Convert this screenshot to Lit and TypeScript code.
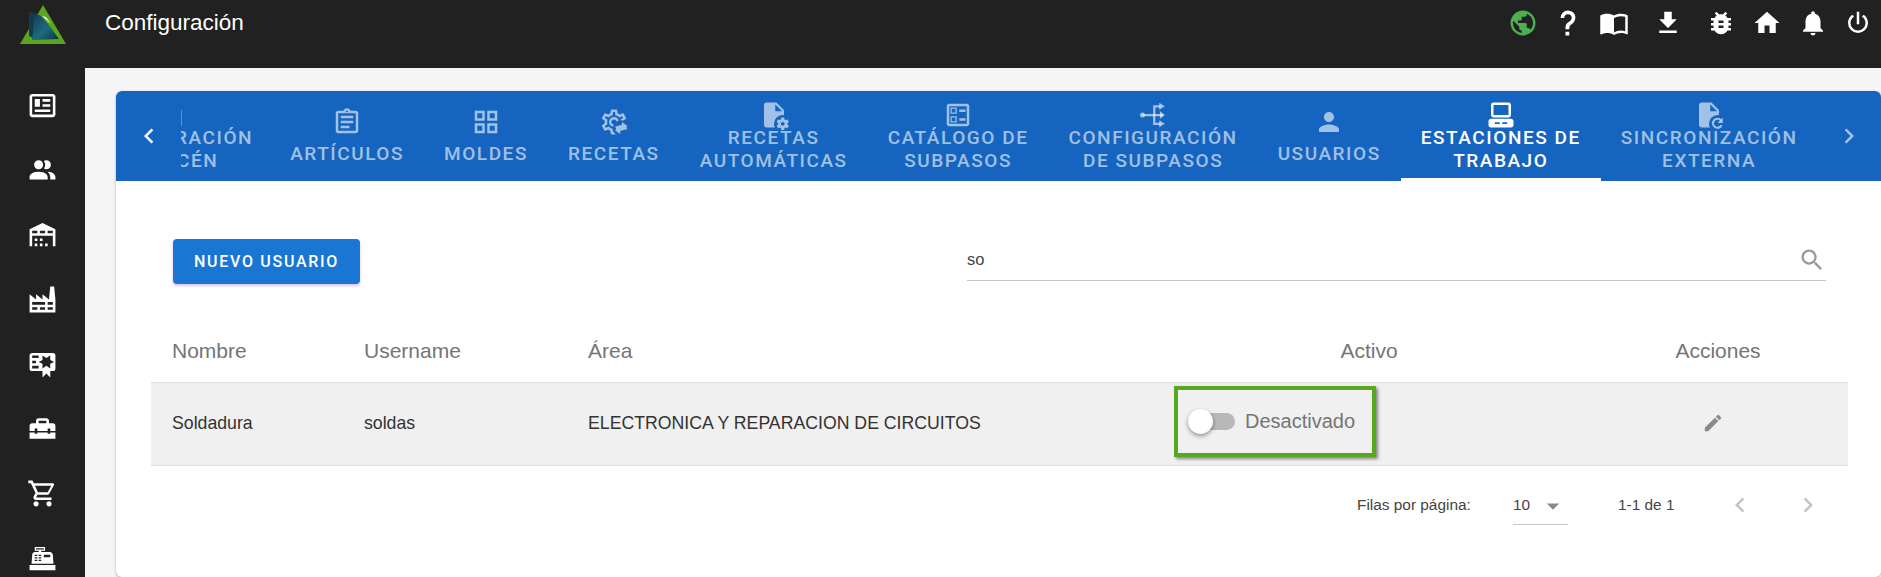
import { LitElement, html, css, svg } from "lit";
import { customElement } from "lit/decorators.js";

const P: Record<string, string> = {
  news: "M20 5L20 19L4 19L4 5H20M20 3H4C2.89 3 2 3.89 2 5V19C2 20.11 2.89 21 4 21H20C21.11 21 22 20.11 22 19V5C22 3.89 21.11 3 20 3M18 15H6V17H18V15M10 7H6V13H10V7M12 9H18V7H12V9M18 11H12V13H18V11Z",
  people: "M16 17V19H2V17S2 13 9 13 16 17 16 17M12.5 7.5A3.5 3.5 0 1 0 9 11A3.5 3.5 0 0 0 12.5 7.5M15.94 13A5.32 5.32 0 0 1 18 17V19H22V17S22 13.37 15.94 13M15 4A3.39 3.39 0 0 0 13.07 4.59A5 5 0 0 1 13.07 10.41A3.39 3.39 0 0 0 15 11A3.5 3.5 0 0 0 15 4Z",
  warehouse: "M6 19H8V21H6V19M12 3L2 8V21H4V13H20V21H22V8L12 3M8 11H4V9H8V11M14 11H10V9H14V11M20 11H16V9H20V11M6 15H8V17H6V15M10 15H12V17H10V15M10 19H12V21H10V19M14 19H16V21H14V19Z",
  factory: "M4,18V20H8V18H4M4,14V16H14V14H4M10,18V20H14V18H10M16,14V16H20V14H16M16,18V20H20V18H16M2,22V8L7,12V8L12,12V8L17,12L18,2H21L22,12V22H2Z",
  cert: "M4,3C2.89,3 2,3.89 2,5V15A2,2 0 0,0 4,17H12V22L15,19L18,22V17H20A2,2 0 0,0 22,15V8L22,6V5A2,2 0 0,0 20,3H16V3H4M12,5L15,7L18,5V8.5L21,10L18,11.5V15L15,13L12,15V11.5L9,10L12,8.5V5M4,5H9V7H4V5M4,9H7V11H4V9M4,13H9V15H4V13Z",
  toolbox: "M18 16H16V15H8V16H6V15H2V20H22V15H18V16M20 8H17V6C17 4.9 16.1 4 15 4H9C7.9 4 7 4.9 7 6V8H4C2.9 8 2 8.9 2 10V14H6V12H8V14H16V12H18V14H22V10C22 8.9 21.1 8 20 8M15 8H9V6H15V8Z",
  cart: "M17,18A2,2 0 0,1 19,20A2,2 0 0,1 17,22C15.89,22 15,21.1 15,20C15,18.89 15.89,18 17,18M1,2H4.27L5.21,4H20A1,1 0 0,1 21,5C21,5.17 20.95,5.34 20.88,5.5L17.3,11.97C16.96,12.58 16.3,13 15.55,13H8.1L7.2,14.63L7.17,14.75A0.25,0.25 0 0,0 7.42,15H19V17H7C5.89,17 5,16.1 5,15C5,14.65 5.09,14.32 5.24,14.04L6.6,11.59L3,4H1V2M7,18A2,2 0 0,1 9,20A2,2 0 0,1 7,22C5.89,22 5,21.1 5,20C5,18.89 5.89,18 7,18M16,11L18.78,6H6.14L8.5,11H16Z",
  register: "M2,17H22V21H2V17M6.25,7H9V6H6V3H14V6H11V7H17.8C18.8,7 19.8,8 20,9L20.5,16H3.5L4.05,9C4.05,8 5.05,7 6.25,7M13,9V11H18V9H13M6,9V10H8V9H6M9,9V10H11V9H9M6,11V12H8V11H6M9,11V12H11V11H9M6,13V14H8V13H6M9,13V14H11V13H9M7,4V5H13V4H7Z",
  earth: "M17.9,17.39C17.64,16.59 16.89,16 16,16H15V13A1,1 0 0,0 14,12H8V10H10A1,1 0 0,0 11,9V7H13A2,2 0 0,0 15,5V4.59C17.93,5.77 20,8.64 20,12C20,14.08 19.2,15.97 17.9,17.39M11,19.93C7.05,19.44 4,16.08 4,12C4,11.38 4.08,10.78 4.21,10.21L9,15V16A2,2 0 0,0 11,18M12,2A10,10 0 0,0 2,12A10,10 0 0,0 12,22A10,10 0 0,0 22,12A10,10 0 0,0 12,2Z",
  help: "M10,19H13V22H10V19M12,2C17.35,2.22 19.68,7.62 16.5,11.67C15.67,12.67 14.33,13.33 13.67,14.17C13,15 13,16 13,17H10C10,15.33 10,13.92 10.67,12.92C11.33,11.92 12.67,11.33 13.5,10.67C15.92,8.43 15.32,5.26 12,5A3,3 0 0,0 9,8H6A6,6 0 0,1 12,2Z",
  book: "M21 5c-1.11-.35-2.33-.5-3.5-.5-1.95 0-4.05.4-5.5 1.5-1.45-1.1-3.55-1.5-5.5-1.5S2.45 4.9 1 6v14.65c0 .25.25.5.5.5.1 0 .15-.05.25-.05C3.1 20.45 5.05 20 6.5 20c1.95 0 4.05.4 5.5 1.5 1.35-.85 3.8-1.5 5.5-1.5 1.65 0 3.35.3 4.75 1.05.1.05.15.05.25.05.25 0 .5-.25.5-.5V6c-.6-.45-1.25-.75-2-1zm0 13.5c-1.1-.35-2.3-.5-3.5-.5-1.7 0-4.15.65-5.5 1.5V8c1.35-.85 3.8-1.5 5.5-1.5 1.2 0 2.4.15 3.5.5v11.5z",
  download: "M19 9h-4V3H9v6H5l7 7 7-7zM5 18v2h14v-2H5z",
  bug: "M20 8h-2.81c-.45-.78-1.07-1.45-1.82-1.96L17 4.41 15.59 3l-2.17 2.17C12.96 5.06 12.49 5 12 5c-.49 0-.96.06-1.41.17L8.41 3 7 4.41l1.62 1.63C7.88 6.55 7.26 7.22 6.81 8H4v2h2.09c-.05.33-.09.66-.09 1v1H4v2h2v1c0 .34.04.67.09 1H4v2h2.81c1.04 1.79 2.97 3 5.19 3s4.15-1.21 5.19-3H20v-2h-2.09c.05-.33.09-.66.09-1v-1h2v-2h-2v-1c0-.34-.04-.67-.09-1H20V8zm-6 8h-4v-2h4v2zm0-4h-4v-2h4v2z",
  home: "M10 20v-6h4v6h5v-8h3L12 3 2 12h3v8z",
  bell: "M12 22c1.1 0 2-.9 2-2h-4c0 1.1.89 2 2 2zm6-6v-5c0-3.07-1.64-5.64-4.5-6.32V4c0-.83-.67-1.5-1.5-1.5s-1.5.67-1.5 1.5v.68C7.63 5.36 6 7.92 6 11v5l-2 2v1h16v-1l-2-2z",
  power: "M16.56,5.44L15.11,6.89C16.84,7.94 18,9.83 18,12A6,6 0 0,1 12,18A6,6 0 0,1 6,12C6,9.83 7.16,7.94 8.88,6.88L7.44,5.44C5.36,6.88 4,9.28 4,12A8,8 0 0,0 12,20A8,8 0 0,0 20,12C20,9.28 18.64,6.88 16.56,5.44M13,3H11V13H13",
  assignment: "M19 3h-4.18C14.4 1.84 13.3 1 12 1s-2.4.84-2.82 2H5c-1.1 0-2 .9-2 2v14c0 1.1.9 2 2 2h14c1.1 0 2-.9 2-2V5c0-1.1-.9-2-2-2zm-7-.25c.41 0 .75.34.75.75s-.34.75-.75.75-.75-.34-.75-.75.34-.75.75-.75zM19 19H5V5h14v14zM7 15h7v2H7zm0-4h10v2H7zm0-4h10v2H7z",
  grid: "M3 3v8h8V3H3zm6 6H5V5h4v4zm-6 4v8h8v-8H3zm6 6H5v-4h4v4zm4-16v8h8V3h-8zm6 6h-4V5h4v4zm-6 4v8h8v-8h-8zm6 6h-4v-4h4v4z",
  cog: "M12,8A4,4 0 0,1 16,12A4,4 0 0,1 12,16A4,4 0 0,1 8,12A4,4 0 0,1 12,8M12,10A2,2 0 0,0 10,12A2,2 0 0,0 12,14A2,2 0 0,0 14,12A2,2 0 0,0 12,10M10,22C9.75,22 9.54,21.82 9.5,21.58L9.13,18.93C8.5,18.68 7.96,18.34 7.44,17.94L4.95,18.95C4.73,19.03 4.46,18.95 4.34,18.73L2.34,15.27C2.21,15.05 2.27,14.78 2.46,14.63L4.57,12.97L4.5,12L4.57,11L2.46,9.37C2.27,9.22 2.21,8.95 2.34,8.73L4.34,5.27C4.46,5.05 4.73,4.96 4.95,5.05L7.44,6.05C7.96,5.66 8.5,5.32 9.13,5.07L9.5,2.42C9.54,2.18 9.75,2 10,2H14C14.25,2 14.46,2.18 14.5,2.42L14.87,5.07C15.5,5.32 16.04,5.66 16.56,6.05L19.05,5.05C19.27,4.96 19.54,5.05 19.66,5.27L21.66,8.73C21.79,8.95 21.73,9.22 21.54,9.37L19.43,11L19.5,12L19.43,13L21.54,14.63C21.73,14.78 21.79,15.05 21.66,15.27L19.66,18.73C19.54,18.95 19.27,19.04 19.05,18.95L16.56,17.95C16.04,18.34 15.5,18.68 14.87,18.93L14.5,21.58C14.46,21.82 14.25,22 14,22H10M11.25,4L10.88,6.61C9.68,6.86 8.62,7.5 7.85,8.39L5.44,7.35L4.69,8.65L6.8,10.2C6.4,11.37 6.4,12.64 6.8,13.8L4.68,15.36L5.43,16.66L7.86,15.62C8.63,16.5 9.68,17.14 10.87,17.38L11.24,20H12.76L13.13,17.39C14.32,17.14 15.37,16.5 16.14,15.62L18.57,16.66L19.32,15.36L17.2,13.81C17.6,12.64 17.6,11.37 17.2,10.2L19.31,8.65L18.56,7.35L16.15,8.39C15.38,7.5 14.32,6.86 13.12,6.62L12.75,4H11.25Z",
  fileCog: "M6 2C4.89 2 4 2.9 4 4V20C4 21.1 4.89 22 6 22H12.68A7 7 0 0 1 12 19A7 7 0 0 1 19 12A7 7 0 0 1 20 12.08V8L14 2H6M13 3.5L18.5 9H13V3.5M18 14C17.87 14 17.76 14.09 17.74 14.21L17.55 15.53C17.25 15.66 16.96 15.82 16.7 16L15.46 15.5C15.35 15.5 15.22 15.5 15.15 15.63L14.15 17.36C14.09 17.47 14.11 17.6 14.21 17.68L15.27 18.5C15.25 18.67 15.24 18.83 15.24 19C15.24 19.17 15.25 19.33 15.27 19.5L14.21 20.32C14.12 20.4 14.09 20.53 14.15 20.64L15.15 22.37C15.21 22.5 15.34 22.5 15.46 22.5L16.7 22C16.96 22.18 17.24 22.35 17.55 22.47L17.74 23.79C17.76 23.91 17.86 24 18 24H20C20.11 24 20.22 23.91 20.24 23.79L20.43 22.47C20.73 22.34 21 22.18 21.27 22L22.5 22.5C22.63 22.5 22.76 22.5 22.83 22.37L23.83 20.64C23.89 20.53 23.86 20.4 23.77 20.32L22.7 19.5C22.72 19.33 22.74 19.17 22.74 19C22.74 18.83 22.73 18.67 22.7 18.5L23.76 17.68C23.85 17.6 23.88 17.47 23.82 17.36L22.82 15.63C22.76 15.5 22.63 15.5 22.5 15.5L21.27 16C21 15.82 20.73 15.65 20.42 15.53L20.23 14.21C20.22 14.09 20.11 14 20 14H18M19 17.5C19.83 17.5 20.5 18.17 20.5 19C20.5 19.83 19.83 20.5 19 20.5C18.16 20.5 17.5 19.83 17.5 19C17.5 18.17 18.17 17.5 19 17.5Z",
  ballot: "M18 7.5H13V9.5H18V7.5M18 14.5H13V16.5H18V14.5M19 3H5C3.9 3 3 3.9 3 5V19C3 20.1 3.9 21 5 21H19C20.1 21 21 20.1 21 19V5C21 3.9 20.1 3 19 3M19 19H5V5H19V19M11 6H6V11H11V6M10 10H7V7H10V10M11 13H6V18H11V13M10 17H7V14H10V17Z",
  user: "M12 12c2.21 0 4-1.79 4-4s-1.79-4-4-4-4 1.79-4 4 1.79 4 4 4zm0 2c-2.67 0-8 1.34-8 4v2h16v-2c0-2.66-5.33-4-8-4z",
  desk: "M6 2C4.89 2 4 2.89 4 4V12C4 13.11 4.89 14 6 14H18C19.11 14 20 13.11 20 12V4C20 2.89 19.11 2 18 2H6M6 4H18V12H6V4M4 15C2.89 15 2 15.89 2 17V20C2 21.11 2.89 22 4 22H20C21.11 22 22 21.11 22 20V17C22 15.89 21.11 15 20 15H4M7 17.75V19.25H11V17.75H7M13 17.75V19.25H17V17.75H13Z",
  fileSync: "M6 2C4.89 2 4 2.9 4 4V20C4 21.1 4.89 22 6 22H12.68A7 7 0 0 1 12 19A7 7 0 0 1 19 12A7 7 0 0 1 20 12.08V8L14 2H6M13 3.5L18.5 9H13V3.5Z",
  left: "M15.41 7.41L14 6l-6 6 6 6 1.41-1.41L10.83 12z",
  right: "M10 6L8.59 7.41 13.17 12l-4.58 4.59L10 18l6-6z",
  search: "M15.5 14h-.79l-.28-.27C15.41 12.59 16 11.11 16 9.5 16 5.91 13.09 3 9.5 3S3 5.91 3 9.5 5.91 16 9.5 16c1.61 0 3.09-.59 4.23-1.57l.27.28v.79l5 4.99L20.49 19l-4.99-5zm-6 0C7.01 14 5 11.99 5 9.5S7.01 5 9.5 5 14 7.01 14 9.5 11.99 14 9.5 14z",
  edit: "M3 17.25V21h3.75L17.81 9.94l-3.75-3.75L3 17.25zM20.71 7.04c.39-.39.39-1.02 0-1.41l-2.34-2.34c-.39-.39-1.02-.39-1.41 0l-1.83 1.83 3.75 3.75 1.83-1.83z",
  caret: "M7 10l5 5 5-5z",
};

const icon = (name: string, cls = "") =>
  html`<svg class="ic ${cls}" viewBox="0 0 24 24" aria-hidden="true"><path fill-rule="evenodd" d=${P[name]}></path></svg>`;

const cogSync = html`<svg class="ic" viewBox="0 0 24 24" aria-hidden="true">
  <path d=${P.cog}></path>
  ${svg`<circle cx="17.5" cy="17" r="6.5" fill="#1565c0"></circle>
  <path d="M13 15.6L18.4 14.2V12L23 15.4 13.8 18.2zM22.6 17.6L17 19.2V21.6L12.6 18.6 21.8 15.6z"></path>`}
</svg>`;

const routes = html`<svg class="ic" viewBox="0 0 24 24" aria-hidden="true">
  ${svg`<circle cx="3.6" cy="12" r="2"></circle>
  <path d="M3.6 11.1H20V12.9H3.6z"></path>
  <path d="M17.5 8.8L21.5 12 17.5 15.2z"></path>
  <path d="M13 12V5H18M13 12V19H18" fill="none" stroke="currentColor" stroke-width="1.8"></path>
  <path d="M17 2.2L21.5 5 17 7.8zM17 16.2L21.5 19 17 21.8z"></path>`}
</svg>`;

const fileSync = html`<svg class="ic" viewBox="0 0 24 24" aria-hidden="true">
  <path d=${P.fileSync}></path>
  ${svg`<path d="M22 20.2A3.6 3.6 0 1 1 21.6 16.4" fill="none" stroke="currentColor" stroke-width="1.7"></path>
  <path d="M23 14.2V18.4H18.8z"></path>`}
</svg>`;

const blank = html`<span class="ic"></span>`;

const tabs: { t: string[]; i: unknown; on?: boolean; first?: boolean }[] = [
  { t: ["CONFIGURACIÓN", "ALMACÉN"], i: blank, first: true },
  { t: ["ARTÍCULOS"], i: icon("assignment") },
  { t: ["MOLDES"], i: icon("grid") },
  { t: ["RECETAS"], i: cogSync },
  { t: ["RECETAS", "AUTOMÁTICAS"], i: icon("fileCog") },
  { t: ["CATÁLOGO DE", "SUBPASOS"], i: icon("ballot") },
  { t: ["CONFIGURACIÓN", "DE SUBPASOS"], i: routes },
  { t: ["USUARIOS"], i: icon("user") },
  { t: ["ESTACIONES DE", "TRABAJO"], i: icon("desk"), on: true },
  { t: ["SINCRONIZACIÓN", "EXTERNA"], i: fileSync },
];

const topIcons: { n: string; w: number; c?: string }[] = [
  { n: "earth", w: 45, c: "green" },
  { n: "help", w: 45 },
  { n: "book", w: 48 },
  { n: "download", w: 60 },
  { n: "bug", w: 46 },
  { n: "home", w: 46 },
  { n: "bell", w: 45 },
  { n: "power", w: 46 },
];

const side = ["news", "people", "warehouse", "factory", "cert", "toolbox", "cart", "register"];

@customElement("app-root")
export class AppRoot extends LitElement {
  static styles = css`
    :host {
      display: block;
      width: 1881px;
      height: 577px;
      overflow: hidden;
      font-family: "Liberation Sans", Arial, sans-serif;
      background: #f5f5f5;
    }
    .ic { display: block; width: 31px; height: 31px; fill: currentColor; flex: none; }
    .page { display: grid; grid-template-columns: 85px 1fr; grid-template-rows: 68px 1fr; height: 577px; }

    .top { grid-column: 1 / 3; background: #212121; color: #fff; display: flex; align-items: flex-start; }
    .logo { width: 85px; height: 68px; flex: none; }
    .logo svg { display: block; width: 85px; height: 68px; }
    .title { font-size: 22.5px; line-height: 24px; margin: 11px 0 0 20px; flex: 1; }
    .actions { display: flex; height: 46px; align-items: center; }
    .act { display: flex; justify-content: center; align-items: center; }
    .act .ic { width: 30px; height: 30px; }
    .act .green { color: #4caf50; }

    .side { background: #212121; color: #fff; display: flex; flex-direction: column; align-items: center; padding-top: 22px; gap: 33.7px; overflow: hidden; }

    .main { padding: 23px 0 0 31px; overflow: hidden; min-width: 0; }
    .card { background: #fff; border-radius: 6px; box-shadow: 0 1px 3px rgba(0,0,0,.3); height: 486px; overflow: hidden; }

    .tabbar { height: 90px; background: #1565c0; display: flex; font-family: Roboto, sans-serif; color: #fff; }
    .nav { width: 65px; flex: none; display: flex; align-items: center; justify-content: center; }
    .nav .ic { width: 30px; height: 30px; }
    .nav.r { width: 63px; opacity: .6; justify-content: flex-start; padding-left: 16px; box-sizing: border-box; }
    .scroll { flex: 1; overflow: hidden; position: relative; min-width: 0; }
    .scroll::before { content: ""; position: absolute; left: 0; top: 19px; width: 1px; height: 16px; background: rgba(255,255,255,.3); }
    .track { display: flex; height: 90px; margin-left: -117px; }
    .tab {
      flex: none; height: 90px; box-sizing: border-box; padding: 0 20px; display: flex; flex-direction: column;
      align-items: center; justify-content: center; color: rgba(255,255,255,.6);
      font-size: 19px; line-height: 23px; font-weight: 500; letter-spacing: 1.55px; text-align: center; white-space: nowrap;
    }
    .tab .ic { width: 30px; height: 30px; }
    .tab.one .ic { margin-bottom: 5px; }
    .tab.two .ic { margin-bottom: -4px; }
    .tab.first { margin-right: -3px; }
    .tab.on { color: #fff; box-shadow: inset 0 -3px 0 #fff; }

    .body { padding: 58px 0 0 35px; }
    .tools { display: flex; justify-content: space-between; padding: 0 55px 0 22px; align-items: flex-start; }
    .btn {
      height: 45px; width: 187px; background: #1976d2; color: #fff; border: 0; border-radius: 4px; padding: 0;
      font: 500 16px Roboto, sans-serif; letter-spacing: 1.7px;
      box-shadow: 0 2px 3px rgba(140,60,220,.3);
    }
    .search { width: 859px; height: 41px; border-bottom: 1px solid #c4c4c4; display: flex; align-items: center; justify-content: space-between; font-size: 16.5px; color: #444; }
    .search .ic { width: 28px; height: 28px; color: #9a9a9a; }

    .table { margin-top: 34px; width: 1697px; }
    .row { display: grid; grid-template-columns: 192px 224px 593px 418px 270px; align-items: center; }
    .head { height: 62px; padding-top: 2px; color: #757575; font-size: 21px; }
    .data { height: 80px; padding-bottom: 2px; background: #f0f0f0; border-top: 1px solid #e0e0e0; border-bottom: 1px solid #e0e0e0; font-size: 17.7px; color: #333; }
    .cell { padding-left: 21px; }
    .center { text-align: center; display: flex; justify-content: center; }
    .acc { padding-left: 10px; }
    .toggle { margin: 0 0 3px 14px; width: 202px; height: 71px; box-sizing: border-box; border: 4px solid #57a81c; box-shadow: 2px 2px 3px rgba(0,0,0,.45); display: flex; align-items: center; color: #757575; font-size: 20px; }
    .sw { position: relative; width: 47px; height: 17px; margin: 0 10px 0 10px; background: #b8b8b8; border-radius: 9px; flex: none; }
    .sw i { position: absolute; left: 0; top: -4px; width: 25px; height: 25px; border-radius: 50%; background: #fff; box-shadow: 0 2px 4px rgba(0,0,0,.4); }
    .edit { width: 22px; height: 22px; color: #8a8a8a; }

    .pager { display: flex; align-items: flex-start; font-size: 15.4px; color: #444; margin-top: 22px; height: 50px; padding-left: 1206px; }
    .pl { width: 156px; line-height: 34px; flex: none; }
    .sel { width: 55px; height: 36px; border-bottom: 1px solid #c8c8c8; display: flex; justify-content: space-between; align-items: flex-start; line-height: 34px; flex: none; }
    .sel .ic { width: 30px; height: 30px; color: #8a8a8a; margin: 3px 0 0 0; }
    .rng { margin-left: 50px; width: 107px; line-height: 34px; flex: none; }
    .pg { color: #c4c4c4; width: 68px; display: flex; flex: none; }
    .pg .ic { width: 30px; height: 30px; margin-top: 2px; }
  `;

  render() {
    return html`<div class="page">
      <header class="top">
        <div class="logo">
          <svg viewBox="0 0 85 68" aria-hidden="true">
            <defs>
              <linearGradient id="lg" x1="0" y1="0" x2="1" y2="1">
                <stop offset="0" stop-color="#123a52"></stop>
                <stop offset=".55" stop-color="#1d6a80"></stop>
                <stop offset="1" stop-color="#0c2f42"></stop>
              </linearGradient>
            </defs>
            <polygon points="43,5 66,44 20,44" fill="#5aa51b"></polygon>
            <polygon points="29,12 35,13 33,38 29,36" fill="#123a52"></polygon>
            <polygon points="35,13 41,16 48,24 59,39 32,40" fill="url(#lg)"></polygon>
            <polygon points="42,16 46,17 51,24" fill="#e9f3ec"></polygon>
          </svg>
        </div>
        <div class="title">Configuración</div>
        <div class="actions">
          ${topIcons.map(
            (a) => html`<div class="act" style="width:${a.w}px">${icon(a.n, a.c ?? "")}</div>`
          )}
        </div>
      </header>
      <nav class="side">${side.map((n) => icon(n))}</nav>
      <main class="main">
        <section class="card">
          <div class="tabbar">
            <div class="nav l">${icon("left")}</div>
            <div class="scroll">
              <div class="track">
                ${tabs.map(
                  (t) => html`<div class="tab ${t.on ? "on" : ""} ${t.first ? "first" : ""} ${t.t.length > 1 ? "two" : "one"}">
                    ${t.i}
                    ${t.t.map((l) => html`<span>${l}</span>`)}
                  </div>`
                )}
              </div>
            </div>
            <div class="nav r">${icon("right")}</div>
          </div>
          <div class="body">
            <div class="tools">
              <button class="btn">NUEVO USUARIO</button>
              <div class="search"><span>so</span>${icon("search")}</div>
            </div>
            <div class="table">
              <div class="row head">
                <div class="cell">Nombre</div>
                <div class="cell">Username</div>
                <div class="cell">Área</div>
                <div class="center">Activo</div>
                <div class="center acc">Acciones</div>
              </div>
              <div class="row data">
                <div class="cell">Soldadura</div>
                <div class="cell">soldas</div>
                <div class="cell">ELECTRONICA Y REPARACION DE CIRCUITOS</div>
                <div>
                  <div class="toggle"><span class="sw"><i></i></span>Desactivado</div>
                </div>
                <div class="center">${icon("edit", "edit")}</div>
              </div>
              <div class="pager">
                <div class="pl">Filas por página:</div>
                <div class="sel"><span>10</span>${icon("caret")}</div>
                <div class="rng">1-1 de 1</div>
                <div class="pg">${icon("left")}</div>
                <div class="pg">${icon("right")}</div>
              </div>
            </div>
          </div>
        </section>
      </main>
    </div>`;
  }
}
